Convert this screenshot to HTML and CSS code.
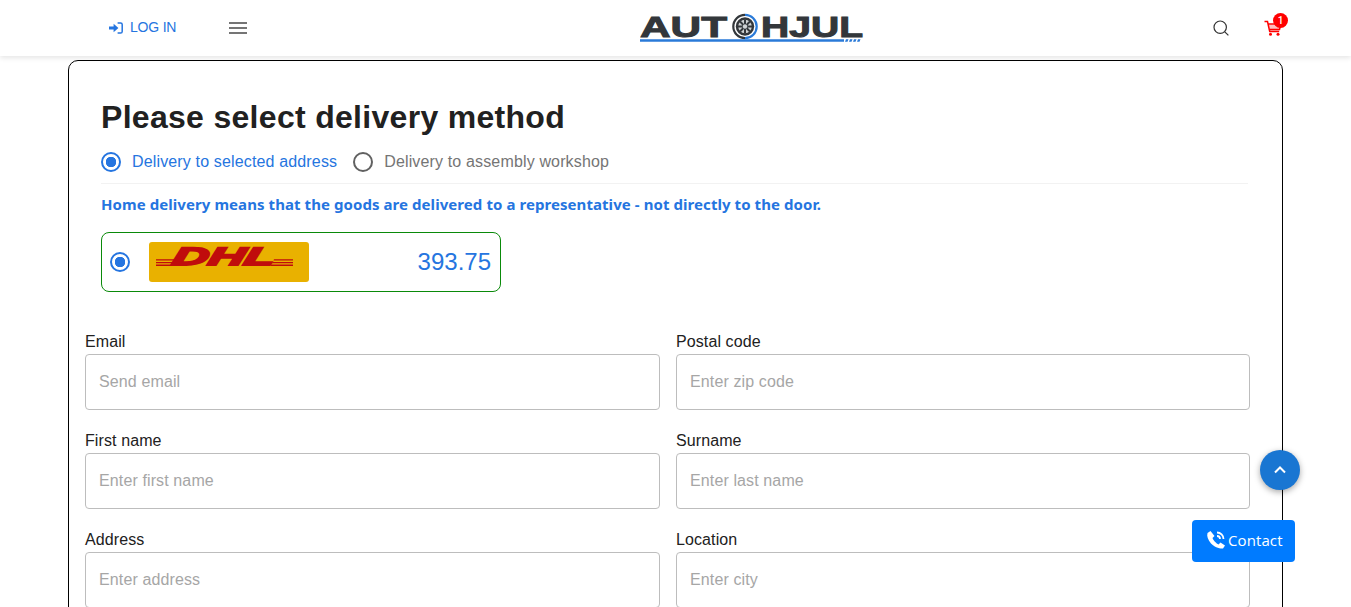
FILE: index.html
```html
<!DOCTYPE html>
<html lang="en">
<head>
<meta charset="utf-8">
<title>Autohjul</title>
<link rel="stylesheet" href="styles.css">
</head>
<body>
<header class="topbar">
  <div class="topbar-left">
    <a class="login" href="#">
      <svg class="login-icon" viewBox="0 0 14 12" width="14" height="12"><path d="M0 4.400h4.600V1.800L9.400 6l-4.800 4.200V7.600H0z" fill="#2575e0"/><path d="M8.600 1h3a1.600 1.600 0 0 1 1.600 1.600v6.800A1.600 1.600 0 0 1 11.600 11h-3" fill="none" stroke="#2575e0" stroke-width="1.500"/></svg>
      <span>LOG IN</span>
    </a>
    <button class="burger" aria-label="Menu"><i></i><i></i><i></i></button>
  </div>
  <a class="logo" href="#" aria-label="Autohjul">
    <svg viewBox="0 0 224 36" width="224" height="36">
      <text class="logo-text" x="0" y="28" textLength="87" lengthAdjust="spacingAndGlyphs">AUT</text>
      <path d="M105 5.800a11.700 11.700 0 0 1 0 23.400" fill="none" stroke="#2a7ad8" stroke-width="2.200"/>
      <path d="M105 29.200a11.700 11.700 0 0 1 0-23.400" fill="none" stroke="#33373b" stroke-width="2.200"/>
      <circle cx="105" cy="17.500" r="9.200" fill="#33373b"/>
      <circle cx="105" cy="17.500" r="6.800" fill="#cfd2d4"/>
      <path d="M105 10.500v14M98 17.500h14M100 12.500l10 10M110 12.500l-10 10" stroke="#33373b" stroke-width="2"/>
      <circle cx="105" cy="17.500" r="2.200" fill="#cfd2d4"/>
      <text class="logo-text" x="121" y="28" textLength="102" lengthAdjust="spacingAndGlyphs">HJUL</text>
      <path d="M0 30.200h204v2.600H0z" fill="#2a7ad8"/>
      <path d="M206 30.200h2.500l-1 2.600H205zM210 30.200h2.500l-1 2.600H209zM214 30.200h2.500l-1 2.600H213zM218 30.200h2.500l-1 2.600H217z" fill="#2a7ad8"/>
    </svg>
  </a>
  <div class="topbar-right">
    <svg class="search" viewBox="0 0 16 16" width="16" height="16"><circle cx="7.200" cy="7.200" r="6.200" fill="none" stroke="#333" stroke-width="1.200"/><path d="M11.800 11.800l3.600 3.600" stroke="#333" stroke-width="1.200"/></svg>
    <span class="cart">
      <svg viewBox="0 0 18 16" width="18" height="16"><path d="M.5 1.500h3l2.200 10h9.500M4 4h13l-1.500 5.500H5.200" fill="none" stroke="#f00" stroke-width="1.500"/><path d="M4.500 4.500h12l-1.300 4.500H5.500z" fill="#f00" opacity=".25"/><circle cx="6.500" cy="14.300" r="1.500" fill="#f00"/><circle cx="14" cy="14.300" r="1.500" fill="#f00"/></svg>
      <b class="cart-badge">1</b>
    </span>
  </div>
</header>

<main class="card">
  <section class="delivery">
    <h1>Please select delivery method</h1>
    <div class="methods">
      <label class="method method-on"><span class="radio radio-on"></span>Delivery to selected address</label>
      <label class="method"><span class="radio"></span>Delivery to assembly workshop</label>
    </div>
    <p class="notice">Home delivery means that the goods are delivered to a representative - not directly to the door.</p>
    <div class="carrier">
      <span class="radio radio-on"></span>
      <svg class="dhl" viewBox="0 0 160 40" width="160" height="40">
        <rect width="160" height="40" rx="3" fill="#e9b100"/>
        <path d="M7 17.200h19l-.5 1.300H7zM7 19.900h17.500l-.5 1.300H7zM7 22.600h16l-.5 1.300H7zM125 17.200h19v1.300h-19.500zM123.500 19.900h20.500v1.300h-21zM122 22.600h22v1.300h-22.500z" fill="#c00c0c"/>
        <text class="dhl-text" x="22" y="23.500" textLength="102" lengthAdjust="spacingAndGlyphs" transform="skewX(-14) translate(6 0)">DHL</text>
      </svg>
      <span class="price">393.75</span>
    </div>
  </section>

  <form class="fields">
    <div class="field"><label>Email</label><input type="text" placeholder="Send email"></div>
    <div class="field"><label>Postal code</label><input type="text" placeholder="Enter zip code"></div>
    <div class="field"><label>First name</label><input type="text" placeholder="Enter first name"></div>
    <div class="field"><label>Surname</label><input type="text" placeholder="Enter last name"></div>
    <div class="field"><label>Address</label><input type="text" placeholder="Enter address"></div>
    <div class="field"><label>Location</label><input type="text" placeholder="Enter city"></div>
  </form>
</main>

<button class="to-top" aria-label="Back to top">
  <svg viewBox="0 0 12 8" width="12" height="8"><path d="M1 6.500l5-5 5 5" fill="none" stroke="#fff" stroke-width="2"/></svg>
</button>
<a class="contact" href="#">
  <svg viewBox="0 0 20 20" width="20" height="20"><path d="M4.500 1L1.500 3c-1 3 .5 7 3.500 10.500S14 19 17 18.500l2-3-4.500-3-2 2c-2-.8-5.500-4.500-6-6.500l2-2z" fill="#fff"/><path d="M11 2.500a6.500 6.500 0 0 1 6.500 6.500M11 6a3 3 0 0 1 3 3" fill="none" stroke="#fff" stroke-width="1.800"/></svg>
  <span>Contact</span>
</a>
</body>
</html>
```
FILE: styles.css
```css
* { box-sizing: border-box; }
html, body { height: 607px; overflow: hidden; }
body { margin: 0; background: #fff; font-family: "Liberation Sans", Arial, sans-serif; color: #212121; }

.topbar {
  height: 56px;
  display: grid;
  grid-template-columns: 531px auto 1fr;
  align-items: center;
  background: #fff;
  box-shadow: 0 2px 5px rgba(0, 0, 0, .1);
  padding: 0 69px 0 109px;
}
.topbar-left { display: flex; align-items: center; gap: 53px; }
.login { display: flex; align-items: center; gap: 7px; color: #2575e0; font: 14px "Liberation Sans", sans-serif; letter-spacing: -.2px; text-decoration: none; margin-top: -2px; }
.login-icon { margin-top: 2px; }
.burger { display: flex; flex-direction: column; gap: 3px; width: 18px; padding: 0; border: 0; background: none; }
.burger i { display: block; height: 2px; background: #757575; }
.logo { display: block; height: 36px; margin-top: -2px; }
.logo-text { font: 700 30px "Liberation Sans", sans-serif; fill: #33373b; stroke: #33373b; stroke-width: 1px; }
.topbar-right { display: flex; justify-content: flex-end; align-items: center; gap: 35px; }
.cart { position: relative; display: block; width: 18px; height: 16px; }
.cart-badge {
  position: absolute; left: 9px; top: -7px;
  width: 15px; height: 15px; border-radius: 50%;
  background: #f00; color: #fff;
  font: 500 10px/15px Roboto, sans-serif; text-align: center;
}

.card {
  margin: 4px 68px 0;
  width: 1215px;
  height: 900px;
  border: 1px solid #000;
  border-radius: 10px;
  padding: 0 32px 0 16px;
}
.delivery { padding: 0 0 0 16px; }
h1 { margin: 0; padding-top: 38px; font-size: 32px; line-height: 36px; font-weight: 700; letter-spacing: .3px; color: #212121; }
.methods { display: flex; gap: 16px; height: 49px; padding-top: 17px; align-items: flex-start; border-bottom: 1px solid #f2f2f2; margin-right: 2px; }
.method { display: flex; align-items: center; gap: 11px; font-size: 16px; letter-spacing: .15px; color: #757575; height: 20px; }
.method-on { color: #2575e0; }
.radio { display: block; flex: none; width: 20px; height: 20px; border: 2px solid #616161; border-radius: 50%; background: #fff; }
.radio-on { border-color: #2575e0; background: radial-gradient(circle, #2575e0 0 5px, #fff 5.500px); }
.notice { margin: 11px 0 19px; font: 700 15px/18px "Noto Sans", sans-serif; letter-spacing: .07px; color: #2575e0; }
.carrier {
  display: flex; align-items: center;
  width: 400px; height: 60px;
  padding: 0 9px 0 8px;
  border: 1px solid #0a8a0a; border-radius: 8px;
}
.dhl { margin-left: 19px; }
.dhl-text { font: italic 700 25px "Liberation Sans", sans-serif; fill: #c00c0c; stroke: #c00c0c; stroke-width: 2px; }
.price { margin-left: auto; font-size: 24px; color: #2575e0; }

.fields {
  display: grid;
  grid-template-columns: 575px 574px;
  column-gap: 16px;
  row-gap: 19px;
  margin-top: 38px;
}
.field { display: flex; flex-direction: column; }
.field label { font: 16px/24px "Liberation Sans", sans-serif; letter-spacing: .1px; color: #212121; height: 24px; }
.field input {
  height: 56px;
  padding: 0 13px;
  border: 1px solid #bdbdbd; border-radius: 4px;
  font: 16px "Liberation Sans", sans-serif;
  letter-spacing: .12px;
  background: #fff;
}
.field input::placeholder { color: #a6a6a6; opacity: 1; }

.to-top {
  position: fixed; left: 1260px; top: 450px;
  width: 40px; height: 40px; padding: 0;
  display: flex; align-items: center; justify-content: center;
  border: 0; border-radius: 50%;
  background: #1976d2;
  box-shadow: 0 2px 6px rgba(0, 0, 0, .35);
}
.contact {
  position: fixed; left: 1192px; top: 520px;
  width: 103px; height: 42px;
  padding: 0 0 2px 14px;
  display: flex; align-items: center; gap: 2px;
  border-radius: 4px;
  background: #007bff; color: #fff;
  font: 15px "Open Sans", sans-serif;
  letter-spacing: .1px;
  text-decoration: none;
}
```
